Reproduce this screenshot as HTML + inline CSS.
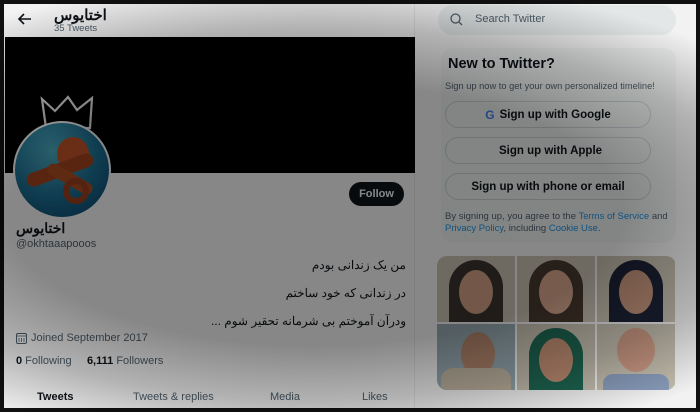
<!DOCTYPE html>
<html><head><meta charset="utf-8"><style>
*{margin:0;padding:0;box-sizing:border-box}
body{width:700px;height:412px;overflow:hidden;background:#111;font-family:"Liberation Sans","Noto Sans CJK SC",sans-serif;position:relative}
.page{position:absolute;left:4px;top:4px;width:692px;height:404px;background:#fff;overflow:hidden}
.left{position:absolute;left:0;top:0;width:411px;height:404px;border-right:1px solid #eee}
.hdr{position:absolute;left:0;top:0;width:411px;height:33px}
.banner{position:absolute;left:1px;top:33px;width:410px;height:136px;background:#000}
.abs{position:absolute}
.grey{color:#536471}
.btn{position:absolute;left:441px;width:206px;height:27px;border:1px solid #cfd9de;border-radius:14px;font-size:11.5px;font-weight:bold;color:#0f1419;display:flex;align-items:center;justify-content:center;gap:5px}
.ov{position:absolute;left:0;top:0;width:700px;height:412px;pointer-events:none;background:radial-gradient(ellipse 80% 58% at 45% 52%,rgba(0,0,0,.47) 55%,rgba(0,0,0,.3) 78%,rgba(0,0,0,.05) 100%)}
.cell{position:absolute;width:78px;height:66px;background:#cfc8b8;overflow:hidden}
.cell .s{position:absolute;left:12px;top:4px;width:54px;height:70px;border-radius:27px 27px 6px 6px;background:#333}
.cell .f{position:absolute;left:22px;top:14px;width:34px;height:44px;border-radius:50%;background:#d9a488}
</style></head><body>
<div class="page">
<div class="left">
 <div class="hdr">
  <svg class="abs" style="left:14px;top:9px" width="14" height="12" viewBox="0 0 14 12"><path d="M13 6H2M6 1L1 6l5 5" stroke="#0f1419" stroke-width="1.6" fill="none"/></svg>
  <div class="abs" style="left:50px;top:2px;font-size:15px;font-weight:bold;color:#0f1419">اختايوس</div>
  <div class="abs grey" style="left:50px;top:19px;font-size:9.5px">35 Tweets</div>
 </div>
 <div class="banner"></div>
 <svg class="abs" style="left:30px;top:88px" width="66" height="40" viewBox="0 0 66 40"><path d="M8 7L21 19L34 5L43 18L58 6L56 36H12Z" fill="none" stroke="#e8e8e8" stroke-width="2.2"/></svg>
 <div class="abs" style="left:9px;top:117px;width:98px;height:98px;border-radius:50%;background:#fff;padding:2px">
  <div style="width:94px;height:94px;border-radius:50%;background:radial-gradient(circle at 40% 30%,#4fb3c9,#1a6f94 55%,#0d3f6b);position:relative;overflow:hidden">
   <div class="abs" style="left:42px;top:14px;width:32px;height:34px;border-radius:50%;background:#c9562a"></div>
   <div class="abs" style="left:10px;top:40px;width:70px;height:14px;border-radius:8px;background:#a8461f;transform:rotate(-20deg)"></div>
   <div class="abs" style="left:30px;top:50px;width:50px;height:12px;border-radius:8px;background:#b34f22;transform:rotate(30deg)"></div>
   <div class="abs" style="left:48px;top:55px;width:26px;height:26px;border-radius:50%;border:6px solid #9c4020"></div>
  </div>
 </div>
 <div class="abs" style="left:345px;top:178px;width:55px;height:24px;border-radius:12px;background:#0f1419;color:#fff;font-size:11px;font-weight:bold;text-align:center;line-height:24px">Follow</div>
 <div class="abs" style="left:12px;top:216px;font-size:14px;font-weight:bold;color:#0f1419">اختايوس</div>
 <div class="abs grey" style="left:12px;top:234px;font-size:11px">@okhtaaapooos</div>
 <div class="abs" style="right:8px;top:254px;font-size:12px;color:#0f1419;direction:rtl">من یک زندانی بودم</div>
 <div class="abs" style="right:8px;top:282px;font-size:12px;color:#0f1419;direction:rtl">در زندانی که خود ساختم</div>
 <div class="abs" style="right:8px;top:310px;font-size:12px;color:#0f1419;direction:rtl">ودرآن آموختم بی شرمانه تحقیر شوم ...</div>
 <svg class="abs" style="left:12px;top:329px" width="11" height="11" viewBox="0 0 11 11"><rect x="0.5" y="0.5" width="10" height="10" rx="1.5" fill="none" stroke="#536471"/><path d="M1 3h9M3 5v4M5.5 5v4M8 5v4" stroke="#536471" stroke-width=".8"/></svg>
 <div class="abs grey" style="left:27px;top:328px;font-size:11px">Joined September 2017</div>
 <div class="abs" style="left:12px;top:351px;font-size:11px;color:#536471"><b style="color:#0f1419">0</b> Following &nbsp;&nbsp;&nbsp; <b style="color:#0f1419">6,111</b> Followers</div>
 <div class="abs" style="left:33px;top:387px;font-size:11px;font-weight:bold;color:#0f1419">Tweets</div>
 <div class="abs grey" style="left:129px;top:387px;font-size:11px">Tweets &amp; replies</div>
 <div class="abs grey" style="left:266px;top:387px;font-size:11px">Media</div>
 <div class="abs grey" style="left:358px;top:387px;font-size:11px">Likes</div>
</div>
<div class="abs" style="left:434px;top:1px;width:238px;height:30px;border-radius:15px;background:#eff3f4"></div>
<svg class="abs" style="left:446px;top:9px" width="13" height="13" viewBox="0 0 13 13"><circle cx="5.5" cy="5.5" r="4.5" fill="none" stroke="#536471" stroke-width="1.3"/><path d="M9 9l3 3" stroke="#536471" stroke-width="1.3"/></svg>
<div class="abs grey" style="left:471px;top:9px;font-size:11px">Search Twitter</div>
<div class="abs" style="left:437px;top:44px;width:235px;height:195px;border-radius:12px;background:#f7f9f9"></div>
<div class="abs" style="left:444px;top:52px;font-size:14.5px;font-weight:bold;color:#0f1419">New to Twitter?</div>
<div class="abs grey" style="left:441px;top:77px;font-size:9.3px">Sign up now to get your own personalized timeline!</div>
<div class="btn" style="top:97px"><span style="font-weight:bold;color:#4285f4;font-size:12px">G</span><span>Sign up with Google</span></div>
<div class="btn" style="top:133px"><span style="font-size:12px"></span>Sign up with Apple</div>
<div class="btn" style="top:169px">Sign up with phone or email</div>
<div class="abs grey" style="left:441px;top:207px;font-size:9.5px;line-height:12px;width:232px">By signing up, you agree to the <span style="color:#1d9bf0">Terms of Service</span> and <span style="color:#1d9bf0">Privacy Policy</span>, including <span style="color:#1d9bf0">Cookie Use</span>.</div>
<div class="abs" style="left:433px;top:252px;width:239px;height:134px;border-radius:10px;overflow:hidden;background:#fff">
 <div class="cell" style="left:0;top:0"><div class="s" style="background:#3a3530"></div><div class="f"></div></div>
 <div class="cell" style="left:80px;top:0"><div class="s" style="background:#4a3a30"></div><div class="f" style="background:#e0ae94"></div></div>
 <div class="cell" style="left:160px;top:0"><div class="s" style="background:#1e2438"></div><div class="f" style="background:#cc9a80"></div></div>
 <div class="cell" style="left:0;top:68px;background:#9cb0b8"><div class="f" style="left:24px;top:8px;background:#b88a70"></div><div class="abs" style="left:4px;top:44px;width:70px;height:30px;border-radius:12px 12px 0 0;background:#c8bca8"></div></div>
 <div class="cell" style="left:80px;top:68px"><div class="s" style="background:#1f6a55"></div><div class="f" style="background:#c99478"></div></div>
 <div class="cell" style="left:160px;top:68px"><div class="f" style="left:20px;top:4px;width:38px;background:#d5a08a"></div><div class="abs" style="left:6px;top:50px;width:66px;height:20px;border-radius:10px 10px 0 0;background:#8fa4c4"></div></div>
</div>
</div>
<div class="ov"></div>
</body></html>
